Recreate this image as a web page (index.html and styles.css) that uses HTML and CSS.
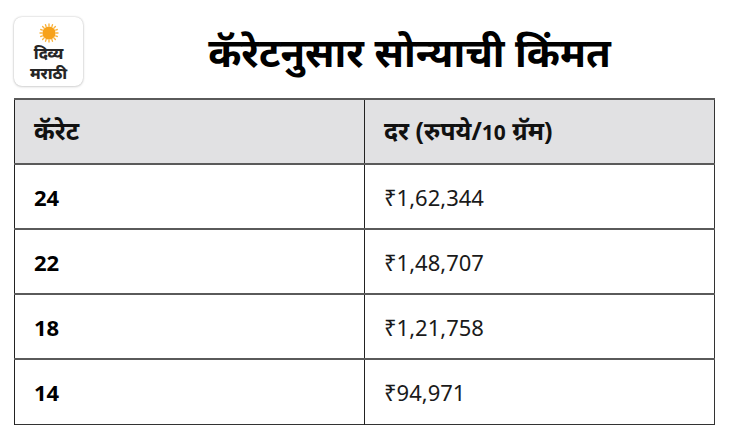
FILE: index.html
```html
<!DOCTYPE html>
<html lang="mr">
<head>
<meta charset="utf-8">
<link rel="stylesheet" href="styles.css">
</head>
<body>
<div class="page">
  <header class="head">
    <div class="logo">
      <svg class="sun" width="20" height="20" viewBox="0 0 20 20" aria-hidden="true">
        <g fill="#f7a21b">
          <circle cx="10" cy="10" r="6.6"/>
          <g stroke="#f9b441" stroke-width="1.4" stroke-linecap="round">
            <line x1="10" y1="1" x2="10" y2="3"/>
            <line x1="10" y1="17" x2="10" y2="19"/>
            <line x1="1" y1="10" x2="3" y2="10"/>
            <line x1="17" y1="10" x2="19" y2="10"/>
            <line x1="3.6" y1="3.6" x2="5" y2="5"/>
            <line x1="15" y1="15" x2="16.4" y2="16.4"/>
            <line x1="3.6" y1="16.4" x2="5" y2="15"/>
            <line x1="15" y1="5" x2="16.4" y2="3.6"/>
            <line x1="6.5" y1="1.7" x2="7.1" y2="3.4"/>
            <line x1="13.5" y1="1.7" x2="12.9" y2="3.4"/>
            <line x1="6.5" y1="18.3" x2="7.1" y2="16.6"/>
            <line x1="13.5" y1="18.3" x2="12.9" y2="16.6"/>
            <line x1="1.7" y1="6.5" x2="3.4" y2="7.1"/>
            <line x1="1.7" y1="13.5" x2="3.4" y2="12.9"/>
            <line x1="18.3" y1="6.5" x2="16.6" y2="7.1"/>
            <line x1="18.3" y1="13.5" x2="16.6" y2="12.9"/>
          </g>
        </g>
      </svg>
      <div class="logo-text">
        <span class="logo-line">दिव्य</span>
        <span class="logo-line">मराठी</span>
      </div>
    </div>
    <h1 class="title">कॅरेटनुसार सोन्याची किंमत</h1>
  </header>
  <table class="rates">
    <thead>
      <tr><th>कॅरेट</th><th>दर (रुपये/<span class="num">10</span> ग्रॅम)</th></tr>
    </thead>
    <tbody>
      <tr><td class="k">24</td><td>₹1,62,344</td></tr>
      <tr><td class="k">22</td><td>₹1,48,707</td></tr>
      <tr><td class="k">18</td><td>₹1,21,758</td></tr>
      <tr><td class="k">14</td><td>₹94,971</td></tr>
    </tbody>
  </table>
</div>
</body>
</html>
```

FILE: styles.css
```css
html, body {
  margin: 0;
  padding: 0;
  background: #fff;
}
body {
  font-family: "Noto Sans", "Noto Sans Devanagari", "Lato", sans-serif;
  color: #111;
}
.page {
  width: 730px;
  height: 442px;
  padding: 17px 0 0 14px;
  box-sizing: border-box;
}
.head {
  display: flex;
  align-items: center;
  height: 69px;
}
.logo {
  width: 69px;
  height: 69px;
  box-sizing: border-box;
  border-radius: 8px;
  background: #fff;
  box-shadow: 0 0 2px rgba(0,0,0,0.25), 0 1px 3px rgba(0,0,0,0.12);
  display: flex;
  flex-direction: column;
  align-items: center;
  padding-top: 6px;
}
.sun {
  display: block;
  flex: none;
}
.logo-text {
  display: flex;
  flex-direction: column;
  align-items: center;
  gap: 0;
  margin-top: 0;
}
.logo-line {
  display: block;
  font-size: 16px;
  font-weight: 800;
  line-height: 20px;
  height: 20px;
  color: #262626;
  letter-spacing: -0.2px;
}
.title {
  flex: 1;
  margin: 0;
  text-align: center;
  font-size: 40px;
  font-weight: 700;
  color: #000;
  padding-left: 6px;
  line-height: 1;
}
.rates {
  margin-top: 12px;
  width: 701px;
  border-collapse: collapse;
  table-layout: fixed;
  border: 1.5px solid #333;
}
.rates th, .rates td {
  width: 50%;
  height: 65px;
  box-sizing: border-box;
  padding: 0 0 0 19px;
  text-align: left;
  font-size: 22px;
  border-top: 2px solid #5a5a5a;
  border-left: 1.5px solid #222;
}
.rates th {
  background: #e1e1e3;
  font-weight: 700;
  font-size: 25px;
  color: #111;
  padding-bottom: 4px;
}
.rates th .num {
  font-size: 21px;
}
.rates td {
  font-weight: 400;
  color: #1a1a1a;
}
.rates td.k {
  font-weight: 700;
  color: #000;
}
```
